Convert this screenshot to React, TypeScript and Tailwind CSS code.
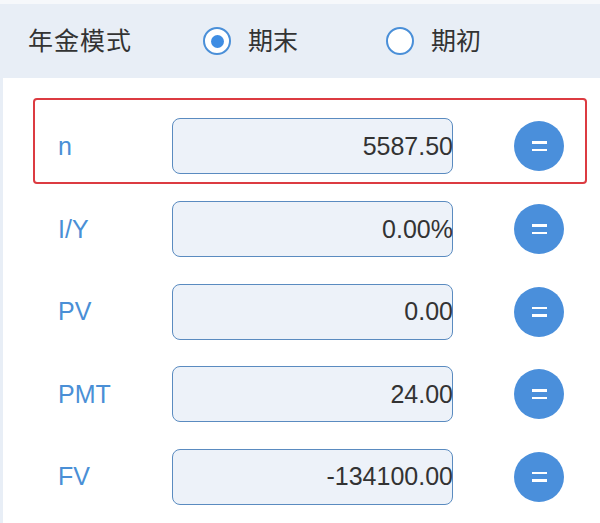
import React, { useState } from 'react';

type RowData = { label: string; value: string };

const rows: RowData[] = [
  { label: 'n', value: '5587.50' },
  { label: 'I/Y', value: '0.00%' },
  { label: 'PV', value: '0.00' },
  { label: 'PMT', value: '24.00' },
  { label: 'FV', value: '-134100.00' },
];

const Radio: React.FC<{ checked: boolean; label: string; onClick: () => void }> = ({ checked, label, onClick }) => (
  <button type="button" onClick={onClick} className="flex items-center gap-[17px]">
    <span className="flex h-[28px] w-[28px] items-center justify-center rounded-full border-2 border-[#4a8fd8] bg-white">
      {checked && <span className="h-[13px] w-[13px] rounded-full bg-[#3f8de3]" />}
    </span>
    <span className="text-[25px] leading-none text-[#333]">{label}</span>
  </button>
);

const CalcRow: React.FC<{ row: RowData }> = ({ row }) => (
  <div className="flex h-[56px] items-center">
    <div className="w-[114px] text-[25px] leading-none text-[#4a8fd6]">{row.label}</div>
    <div className="flex h-[56px] w-[281px] items-center justify-end rounded-[8px] border-[1.5px] border-[#5a8bc0] bg-[#edf2f9]">
      <span className="-mr-[1px] text-[25px] leading-none text-[#333]">{row.value}</span>
    </div>
    <button
      type="button"
      className="ml-[61px] flex h-[50px] w-[50px] flex-col items-center justify-center gap-[5px] rounded-full bg-[#4a8fdb]"
      aria-label="="
    >
      <span className="h-[2.5px] w-[15px] bg-white" />
      <span className="h-[2.5px] w-[15px] bg-white" />
    </button>
  </div>
);

export default function App() {
  const [mode, setMode] = useState<'end' | 'begin'>('end');

  return (
    <div
      className="h-[523px] w-[600px] overflow-hidden bg-[#e8eef6]"
      style={{ fontFamily: '"Liberation Sans", "Noto Sans CJK SC", sans-serif' }}
    >
      <div className="h-[4px] bg-[#f6f8fb]" />
      <div className="flex h-[74px] items-center pl-[28px]">
        <span className="w-[175px] text-[25px] leading-none tracking-[1px] text-[#333]">年金模式</span>
        <Radio checked={mode === 'end'} label="期末" onClick={() => setMode('end')} />
        <div className="w-[88px]" />
        <Radio checked={mode === 'begin'} label="期初" onClick={() => setMode('begin')} />
      </div>
      <div className="ml-[3px] h-full bg-white pl-[30px] pt-[20px]">
        <div className="w-[554px] rounded-[4px] border-2 border-[#dc3b41] pb-[8px] pl-[23px] pt-[18px]">
          <CalcRow row={rows[0]} />
        </div>
        <div className="mt-[17px] flex flex-col gap-[26.5px] pl-[25px]">
          {rows.slice(1).map((r) => (
            <CalcRow key={r.label} row={r} />
          ))}
        </div>
      </div>
    </div>
  );
}
